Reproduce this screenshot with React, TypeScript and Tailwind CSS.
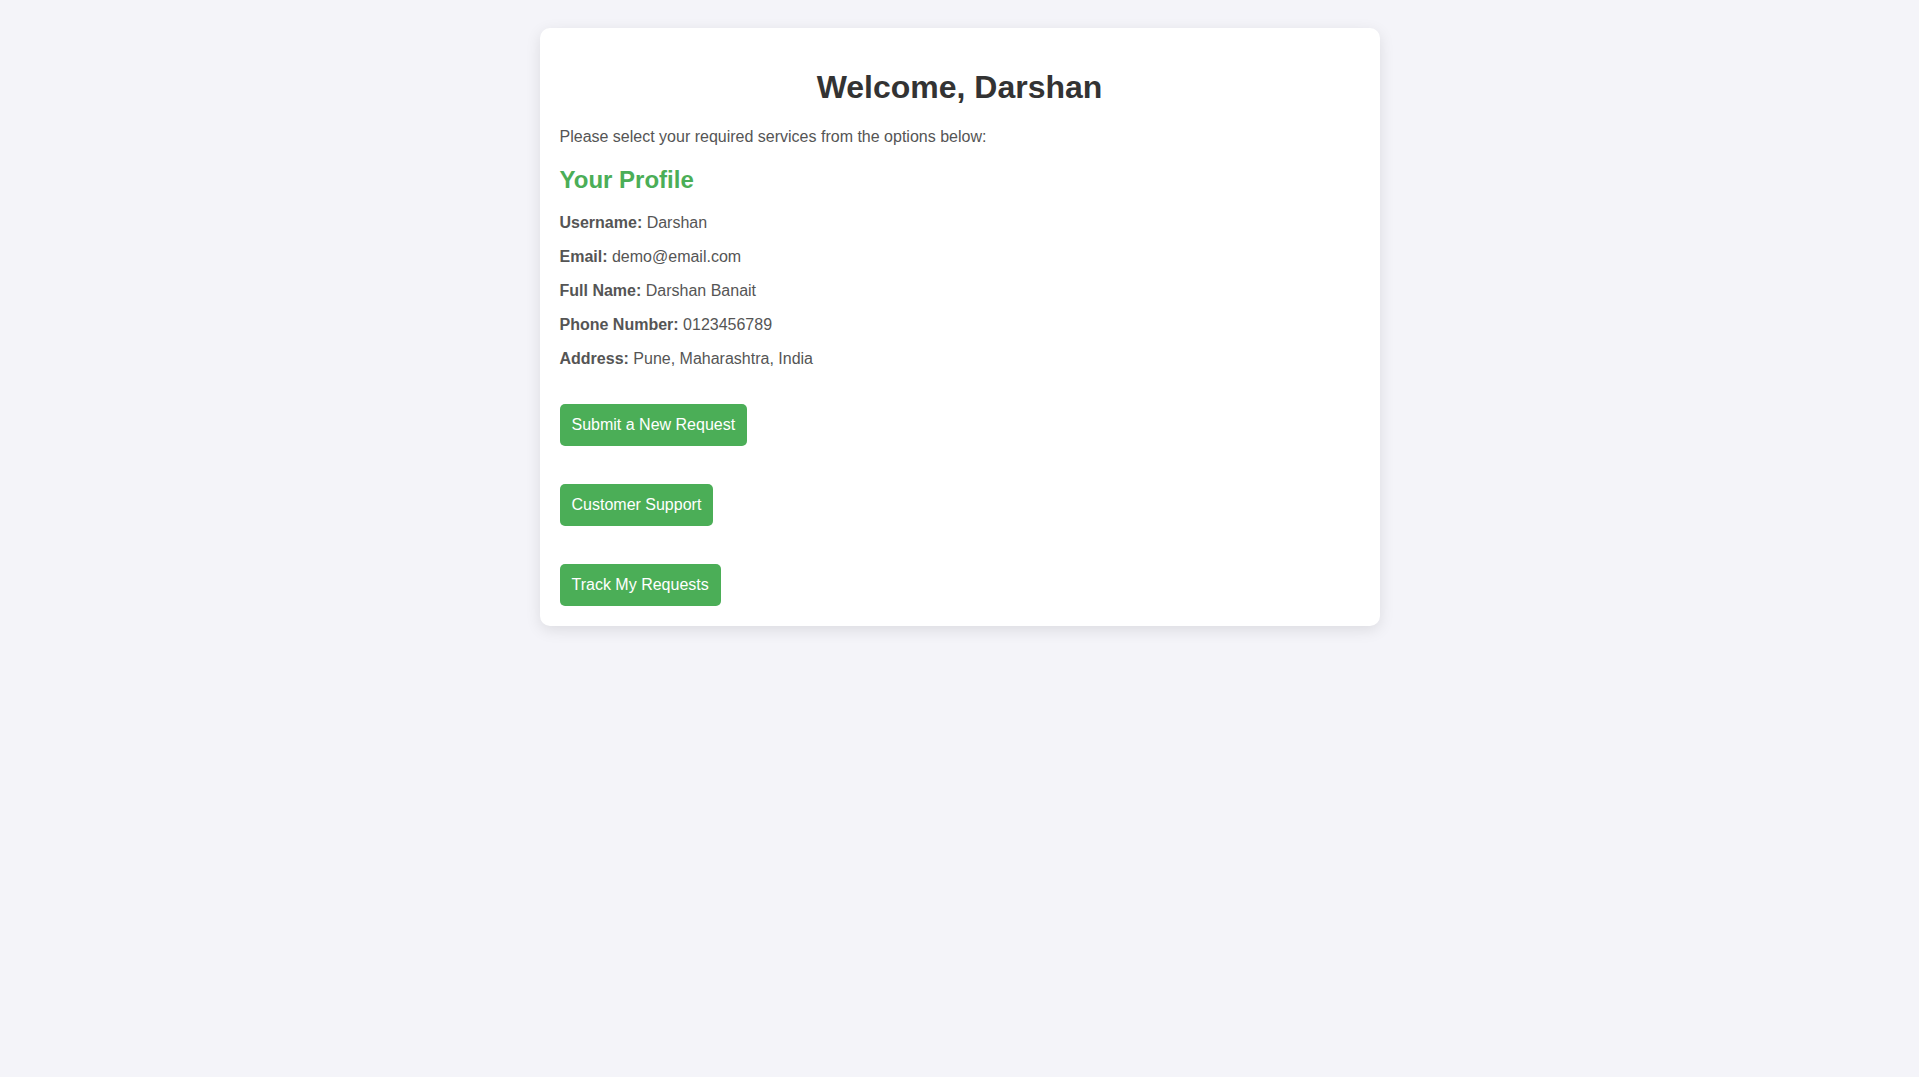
const profile = [
  ["Username:", "Darshan"],
  ["Email:", "demo@email.com"],
  ["Full Name:", "Darshan Banait"],
  ["Phone Number:", "0123456789"],
  ["Address:", "Pune, Maharashtra, India"],
];

const actions = ["Submit a New Request", "Customer Support", "Track My Requests"];

export default function App() {
  return (
    <div className="min-h-screen bg-[#f4f4f9] px-5 py-7 font-['Liberation_Sans',Arial,sans-serif] text-base leading-[18px] text-[#555]">
      <main className="mx-auto max-w-[840px] rounded-[10px] bg-white p-5 shadow-[0_4px_15px_rgba(0,0,0,0.1)]">
        <h1 className="mt-5 text-center text-[32px] leading-[38px] font-bold text-[#333]">Welcome, Darshan</h1>
        <p className="mt-[22px]">Please select your required services from the options below:</p>
        <h2 className="mt-5 text-2xl leading-7 font-bold text-[#4bae57]">Your Profile</h2>
        <div className="mt-5 flex flex-col gap-4">
          {profile.map(([label, value]) => (
            <p key={label}>
              <strong>{label}</strong> {value}
            </p>
          ))}
        </div>
        <nav className="mt-9 flex flex-col items-start gap-[38px]">
          {actions.map((label) => (
            <a key={label} href="#" className="rounded-[5px] bg-[#4bae57] px-3 py-3 text-white">
              {label}
            </a>
          ))}
        </nav>
      </main>
    </div>
  );
}
